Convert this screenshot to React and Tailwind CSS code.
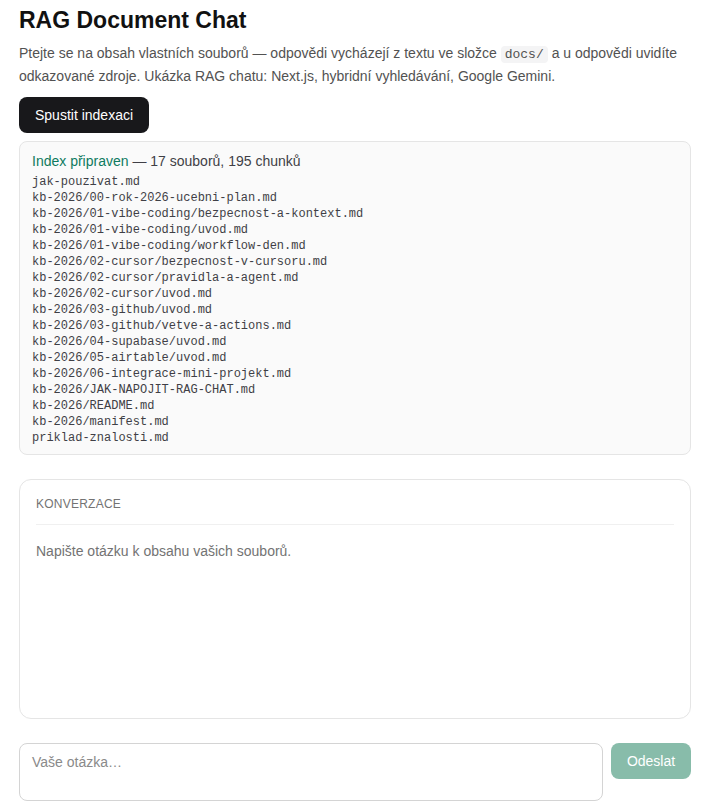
import { useState } from 'react'

const files = [
  'jak-pouzivat.md',
  'kb-2026/00-rok-2026-ucebni-plan.md',
  'kb-2026/01-vibe-coding/bezpecnost-a-kontext.md',
  'kb-2026/01-vibe-coding/uvod.md',
  'kb-2026/01-vibe-coding/workflow-den.md',
  'kb-2026/02-cursor/bezpecnost-v-cursoru.md',
  'kb-2026/02-cursor/pravidla-a-agent.md',
  'kb-2026/02-cursor/uvod.md',
  'kb-2026/03-github/uvod.md',
  'kb-2026/03-github/vetve-a-actions.md',
  'kb-2026/04-supabase/uvod.md',
  'kb-2026/05-airtable/uvod.md',
  'kb-2026/06-integrace-mini-projekt.md',
  'kb-2026/JAK-NAPOJIT-RAG-CHAT.md',
  'kb-2026/README.md',
  'kb-2026/manifest.md',
  'priklad-znalosti.md',
]

export default function App() {
  const [question, setQuestion] = useState('')

  return (
    <div className="min-h-screen bg-white font-['Liberation_Sans',Arial,sans-serif] text-[#171717]">
      <main className="w-[672px] ml-[19px] pt-[4px] pb-2">
        <h1 className="text-[23px] font-bold leading-[32px] text-[#111]">RAG Document Chat</h1>

        <p className="mt-[6px] text-[14px] leading-[23px] text-[#525252]">
          Ptejte se na obsah vlastních souborů — odpovědi vycházejí z textu ve složce{' '}
          <code className="rounded bg-[#f4f4f5] px-[4px] py-[1px] font-['Liberation_Mono',monospace] text-[13px] leading-none text-[#525252]">
            docs/
          </code>{' '}
          a u odpovědi uvidíte odkazované zdroje. Ukázka RAG chatu: Next.js, hybridní vyhledávání, Google Gemini.
        </p>

        <button className="mt-[9px] h-[36px] rounded-lg bg-[#18181b] px-4 text-[14px] text-white">
          Spustit indexaci
        </button>

        {/* Index status */}
        <section className="mt-[8px] rounded-lg border border-[#e5e5e5] bg-[#fafafa] px-[12px] pt-[9px] pb-[8px]">
          <div className="text-[14px] leading-[20px] text-[#3f3f46]">
            <span className="text-[#0f7a5f]">Index připraven</span> — 17 souborů, 195 chunků
          </div>
          <ul className="mt-[3px] font-['Liberation_Mono',monospace] text-[12px] leading-[16px] text-[#3f3f46]">
            {files.map((f) => (
              <li key={f}>{f}</li>
            ))}
          </ul>
        </section>

        {/* Conversation */}
        <section className="mt-[24px] h-[240px] rounded-xl border border-[#e5e5e5] bg-white px-[16px] pt-[16px]">
          <div className="border-b border-[#f0f0f0] pb-[12px] text-[12px] leading-[16px] uppercase tracking-[0.02em] text-[#737373]">
            Konverzace
          </div>
          <p className="mt-[16px] text-[14px] leading-[20px] text-[#737373]">Napište otázku k obsahu vašich souborů.</p>
        </section>

        {/* Input row */}
        <form className="mt-[24px] flex items-start gap-[8px]" onSubmit={(e) => e.preventDefault()}>
          <textarea
            value={question}
            onChange={(e) => setQuestion(e.target.value)}
            placeholder="Vaše otázka…"
            rows={2}
            className="h-[58px] flex-1 resize-none rounded-lg border border-[#d4d4d4] px-[12px] py-[8px] text-[14px] leading-[20px] placeholder:text-[#8a8a8a] outline-none"
          />
          <button
            type="submit"
            disabled={!question}
            className="h-[36px] w-[80px] rounded-lg bg-[#88bcaa] text-[14px] text-white"
          >
            Odeslat
          </button>
        </form>
      </main>
    </div>
  )
}
